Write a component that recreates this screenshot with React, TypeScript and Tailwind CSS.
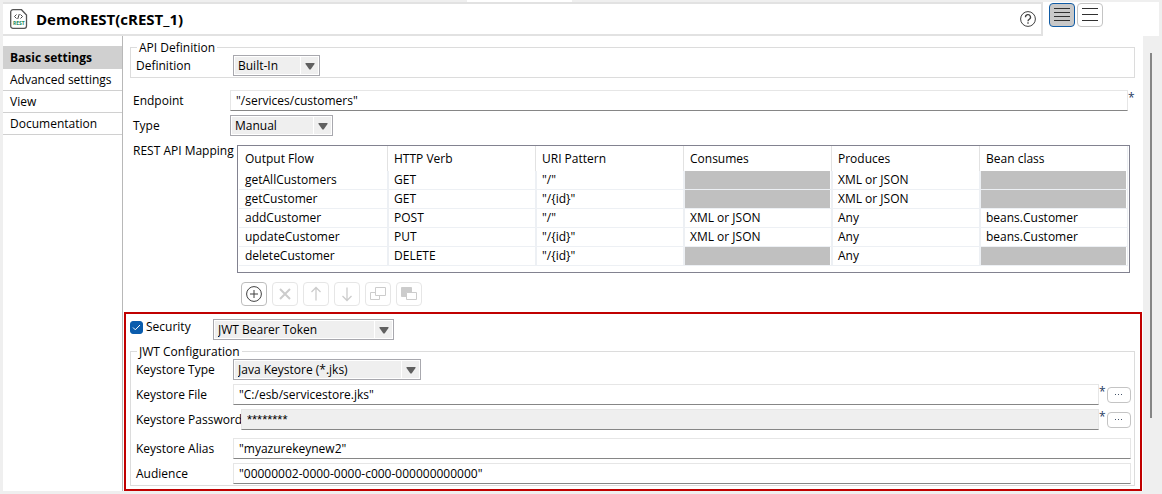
import { useState } from "react";
import type { ReactNode } from "react";

const tabs = ["Basic settings", "Advanced settings", "View", "Documentation"];

const columns = ["Output Flow", "HTTP Verb", "URI Pattern", "Consumes", "Produces", "Bean class"];

// null = cell that can't be edited
const mappings = [
  ["getAllCustomers", "GET", '"/"', null, "XML or JSON", null],
  ["getCustomer", "GET", '"/{id}"', null, "XML or JSON", null],
  ["addCustomer", "POST", '"/"', "XML or JSON", "Any", "beans.Customer"],
  ["updateCustomer", "PUT", '"/{id}"', "XML or JSON", "Any", "beans.Customer"],
  ["deleteCustomer", "DELETE", '"/{id}"', null, "Any", null],
];

const Select = ({ id, label, value, className }: { id: string; label?: string; value: string; className: string }) => (
  <div className={`relative h-[21px] border border-[#a8a8ae] bg-white p-px ${className}`}>
    <select
      id={id}
      aria-label={label}
      defaultValue={value}
      className="block h-full w-full appearance-none bg-[#efefef] pr-5 pl-[3px] leading-4 outline-none"
    >
      <option>{value}</option>
    </select>
    <span className="pointer-events-none absolute inset-y-px right-px flex w-[18px] items-center justify-center border-l border-white">
      <svg width="10" height="8" viewBox="0 0 10 8">
        <path d="M0.5 1h9v1L5.600 7.500H4.400L0.500 2z" fill="#606060" />
      </svg>
    </span>
  </div>
);

const TextField = ({ id, value, readOnly, className = "" }: { id: string; value: string; readOnly?: boolean; className?: string }) => (
  <input
    id={id}
    type="text"
    defaultValue={value}
    readOnly={readOnly}
    className={`h-[21px] min-w-0 flex-1 border border-[#e6e6e6] border-b-[#868686] px-[5px] leading-4 outline-none ${readOnly ? "bg-[#efefef]" : "bg-white"} ${className}`}
  />
);

const Required = () => <span className="w-2 self-start text-[#1f3a5f]">*</span>;

const Browse = ({ label }: { label: string }) => (
  <button type="button" aria-label={label} className="flex h-4 w-6 items-center justify-center rounded-[4px] border border-[#c4c4c4] bg-white">
    <svg width="8" height="2" viewBox="0 0 8 2" fill="#44546a">
      <path d="M0 0h1v1H0zM3 0h1v1H3zM6 0h1v1H6z" />
    </svg>
  </button>
);

const ToolButton = ({ label, disabled, children }: { label: string; disabled?: boolean; children: ReactNode }) => (
  <button
    type="button"
    aria-label={label}
    disabled={disabled}
    className={`flex h-6 w-[26px] items-center justify-center rounded-[4px] border bg-white ${disabled ? "border-[#e6e6e6] text-[#cccccc]" : "border-[#bdbdbd] text-[#404040]"}`}
  >
    <svg width="16" height="16" viewBox="0 0 16 16" fill="none" stroke="currentColor">
      {children}
    </svg>
  </button>
);

const App = () => {
  const [activeTab, setActiveTab] = useState("Basic settings");
  const [security, setSecurity] = useState(true);

  return (
    <div className="min-h-screen bg-[#efefef] px-[3px] pb-1 font-['Open_Sans',sans-serif] text-[12px] leading-4 text-black">
      <div className="flex h-0.5">
        <div className="ml-[464px] w-[105px] bg-white" />
      </div>

      {/* Header */}
      <header className="flex bg-white">
        <div className="flex h-[34px] flex-1 items-center border-y-2 border-r-2 border-[#e2e2e2] pr-[5px] pl-[7px]">
          <svg width="18" height="20" viewBox="0 0 18 20" fill="none">
            <path d="M3 0.700h8.500L16.500 6v11a2.300 2.300 0 0 1-2.300 2.300H3A2.300 2.300 0 0 1 0.700 17V3A2.300 2.300 0 0 1 3 0.700z" stroke="#555" strokeWidth="1.300" />
            <path d="M6.500 5.500L4.500 7.500l2 2M10.500 5.500l2 2-2 2M9.300 5L7.700 10" stroke="#444" />
            <text x="3" y="16" fontSize="5" fontWeight="700" fill="#1c8a5a">REST</text>
          </svg>
          <h1 className="ml-2 flex-1 text-[15px] font-bold">DemoREST(cREST_1)</h1>
          <button type="button" aria-label="Help">
            <svg width="16" height="16" viewBox="0 0 16 16" fill="none" stroke="#404040">
              <circle cx="8" cy="8" r="7.400" />
              <path d="M5.500 6.300a2.500 2.500 0 1 1 3.800 2C8.300 8.900 8 9.200 8 10.200M8 11.300v1.500" strokeWidth="1.300" />
            </svg>
          </button>
        </div>
        <div className="flex w-[116px] items-start gap-0.5 pt-px pl-1.5">
          <button type="button" aria-label="Compact view" className="flex h-6 w-[26px] items-center justify-center rounded-[4px] border border-[#0f5ba5] bg-[#c8c8c8]">
            <svg width="16" height="14" viewBox="0 0 16 14" stroke="#303030">
              <path d="M0 0.500h16M0 4.500h16M0 8.500h16M0 12.500h16" />
            </svg>
          </button>
          <button type="button" aria-label="Table view" className="flex h-6 w-[26px] items-center justify-center rounded-[4px] border border-[#c4c4c4] bg-white">
            <svg width="16" height="14" viewBox="0 0 16 14" stroke="#303030">
              <path d="M0 0.500h16M0 6.500h16M0 12.500h16" />
            </svg>
          </button>
        </div>
      </header>

      <div className="flex">
        {/* Tabs */}
        <nav className="flex w-[120px] shrink-0 flex-col border-r border-[#b8b8b8] bg-white pt-2.5">
          {tabs.map((tab) => (
            <button
              key={tab}
              type="button"
              onClick={() => setActiveTab(tab)}
              className={`pl-[7px] text-left whitespace-nowrap ${tab === activeTab ? "h-[23px] bg-[#d0d0d0] font-bold" : "h-[22px] border-b border-[#d0d0d0]"}`}
            >
              {tab}
            </button>
          ))}
        </nav>

        <main className="min-w-0 flex-1 bg-white">
          <fieldset className="mt-1 mr-2 ml-[7px] border border-[#dcdcdc] pb-px pl-[5px]">
            <legend className="ml-px h-[15px] px-[2px] leading-[15px]">API Definition</legend>
            <div className="flex items-center">
              <label htmlFor="definition" className="w-[97px]">Definition</label>
              <Select id="definition" value="Built-In" className="w-[87px]" />
            </div>
          </fieldset>

          <div className="mt-3 flex items-center pr-[7px] pl-2.5">
            <label htmlFor="endpoint" className="w-[97px]">Endpoint</label>
            <TextField id="endpoint" value={'"/services/customers"'} />
            <Required />
          </div>

          <div className="mt-1 flex items-center pl-2.5">
            <label htmlFor="type" className="w-[97px]">Type</label>
            <Select id="type" value="Manual" className="w-[103px]" />
          </div>

          <div className="mt-[9px] flex pr-[13px] pl-2.5">
            <span id="mapping" className="-mt-0.5 w-[104px] whitespace-nowrap">REST API Mapping</span>
            <div className="min-w-0 flex-1 border border-[#828290] pr-px pb-1.5 pl-px">
              <table aria-labelledby="mapping" className="w-full table-fixed border-separate border-spacing-0 border-r border-[#ebeef2] text-left">
                <thead>
                  <tr className="h-[25px]">
                    {columns.map((column) => (
                      <th key={column} className="border-l border-[#e2e2e2] py-0 pl-1.5 font-normal first:border-l-0">{column}</th>
                    ))}
                  </tr>
                </thead>
                <tbody>
                  {mappings.map((row) => (
                    <tr key={row[0]} className="h-[19px]">
                      {row.map((cell, i) => (
                        <td key={i} className="border-b border-l-2 border-[#edf0f4] p-0 first:border-l-0 first:pl-px">
                          {cell ? (
                            <div className="h-[18px] pl-[5px] leading-[18px]">{cell}</div>
                          ) : (
                            <div className="mr-px h-[18px] bg-[#c0c0c0]" />
                          )}
                        </td>
                      ))}
                    </tr>
                  ))}
                </tbody>
              </table>
            </div>
          </div>

          <div className="mt-[9px] ml-[118px] flex gap-[5px]">
            <ToolButton label="Add">
              <circle cx="8" cy="8" r="7.400" />
              <path d="M8 4v8M4 8h8" />
            </ToolButton>
            <ToolButton label="Remove" disabled>
              <path d="M3 3l10 10M13 3L3 13" strokeWidth="2" />
            </ToolButton>
            <ToolButton label="Move up" disabled>
              <path d="M8 1.500v13M3.500 6L8 1.500 12.500 6" strokeWidth="1.300" />
            </ToolButton>
            <ToolButton label="Move down" disabled>
              <path d="M8 1.500v13M3.500 10L8 14.500l4.500-4.500" strokeWidth="1.300" />
            </ToolButton>
            <ToolButton label="Copy" disabled>
              <path d="M5.500 1.500h10v8h-10zM5.500 6.500h-5v7h9v-4" />
            </ToolButton>
            <ToolButton label="Paste" disabled>
              <path d="M0.500 1.500h10v5h-5v4h-5z" fill="currentColor" />
              <path d="M5.500 6.500h10v7h-10z" fill="white" />
            </ToolButton>
          </div>

          {/* Security */}
          <section className="mt-1.5 mr-px ml-px border-2 border-[#c00000] px-1 pt-[5px] pb-[3px]">
            <div className="flex items-start">
              <label className="flex w-[83px] items-center gap-[3px]">
                <input type="checkbox" checked={security} onChange={(e) => setSecurity(e.target.checked)} className="peer sr-only" />
                <span className="flex size-[13px] items-center justify-center rounded-[3px] border border-[#0a5cad] peer-checked:bg-[#0a5cad]">
                  <svg width="9" height="7" viewBox="0 0 9 7" fill="none" stroke="white">
                    <path d="M1 3.500l2.300 2.300L8 1" />
                  </svg>
                </span>
                Security
              </label>
              <Select id="token" label="Security type" value="JWT Bearer Token" className="w-[181px]" />
            </div>

            <fieldset className="mt-1 mr-px border border-[#dcdcdc] pb-px pl-[5px]">
              <legend className="ml-px h-[15px] px-[2px] leading-[15px]">JWT Configuration</legend>
              <div className="flex items-center">
                <label htmlFor="keystore-type" className="w-[97px]">Keystore Type</label>
                <Select id="keystore-type" value="Java Keystore (*.jks)" className="w-[188px]" />
              </div>
              <div className="mt-1 flex items-center pr-[3px]">
                <label htmlFor="keystore-file" className="w-[97px]">Keystore File</label>
                <TextField id="keystore-file" value={'"C:/esb/servicestore.jks"'} />
                <Required />
                <Browse label="Browse keystore file" />
              </div>
              <div className="mt-1 flex items-center pr-[3px]">
                <label htmlFor="keystore-password" className="w-[105px] whitespace-nowrap">Keystore Password</label>
                <TextField id="keystore-password" value="********" readOnly className="font-['Liberation_Sans',sans-serif] text-[13px]" />
                <Required />
                <Browse label="Edit keystore password" />
              </div>
              <div className="mt-2 flex items-center pr-[3px]">
                <label htmlFor="keystore-alias" className="w-[97px]">Keystore Alias</label>
                <TextField id="keystore-alias" value={'"myazurekeynew2"'} />
              </div>
              <div className="mt-1 flex items-center pr-[3px]">
                <label htmlFor="audience" className="w-[97px]">Audience</label>
                <TextField id="audience" value={'"00000002-0000-0000-c000-000000000000"'} />
              </div>
            </fieldset>
          </section>
        </main>

        {/* Scroll track */}
        <div className="flex w-4 shrink-0 flex-col pt-[17px] pb-[73px] pl-[7px]">
          <div className="w-0.5 flex-1 bg-[#868686]" />
        </div>
      </div>
    </div>
  );
};

export default App;
